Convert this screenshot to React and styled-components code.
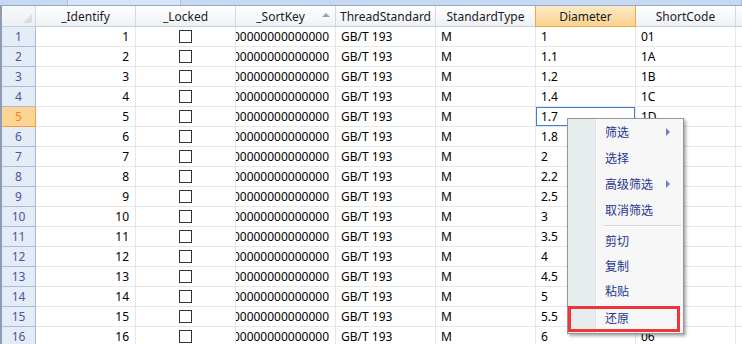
import React from 'react';
import styled, { createGlobalStyle } from 'styled-components';

const GlobalStyle = createGlobalStyle`
  html, body {
    margin: 0;
    padding: 0;
    background: #ffffff;
    overflow: hidden;
  }
  body {
    font-family: "Noto Sans", "Noto Sans CJK SC", sans-serif;
    font-size: 12px;
    color: #000000;
  }
`;

const Page = styled.div`
  position: relative;
  width: 742px;
  height: 344px;
  overflow: hidden;
`;

const TopStrip = styled.div`
  display: flex;
  height: 5px;
  border-bottom: 1px solid #8eaad0;
`;

const StripSeg = styled.div`
  width: ${(p) => p.$w}px;
  flex: ${(p) => (p.$grow ? 1 : 'none')};
  background: ${(p) => (p.$light ? '#d6e4f6' : '#c6d9f1')};
  border-right: 1px solid #a9bfdc;
`;

const Grid = styled.div`
  border-left: 2px solid #8d9db3;
  display: flex;
  flex-direction: column;
`;

const HeaderRow = styled.div`
  display: flex;
  height: 20px;
  border-bottom: 1px solid #c5cfdb;
  background: linear-gradient(#ffffff, #eef1f5);
`;

const Corner = styled.div`
  position: relative;
  flex: none;
  width: 33px;
  border-right: 1px solid #d3dae3;
  background: linear-gradient(#f7f8fa, #eceff3);

  &::after {
    content: '';
    position: absolute;
    right: 3px;
    bottom: 3px;
    border-left: 9px solid transparent;
    border-bottom: 9px solid #d9dde2;
  }
`;

const HeaderCell = styled.div`
  position: relative;
  flex: none;
  width: 99px;
  box-sizing: border-box;
  padding-right: ${(p) => (p.$sort ? '10px' : '0')};
  border-right: 1px solid ${(p) => (p.$active ? '#f3a648' : '#d3dae3')};
  border-left: ${(p) => (p.$active ? '1px solid #f3a648' : 'none')};
  margin-left: ${(p) => (p.$active ? '-1px' : '0')};
  ${(p) => (p.$active ? 'width: 101px;' : 'width: 100px;')}
  box-shadow: ${(p) => (p.$active ? '0 1px 0 #f3a648' : 'none')};
  background: ${(p) =>
    p.$active ? 'linear-gradient(#fde9c4, #f9d38f)' : 'transparent'};
  display: flex;
  align-items: center;
  justify-content: center;
  color: #1b1b1b;
  white-space: nowrap;
`;

const SortArrow = styled.span`
  position: absolute;
  right: 5px;
  top: 7px;
  width: 0;
  height: 0;
  border-left: 4px solid transparent;
  border-right: 4px solid transparent;
  border-bottom: 4px solid #98a3af;
`;

const Row = styled.div`
  display: flex;
  height: 19px;
  border-bottom: 1px solid #e6e6e6;
`;

const RowHead = styled.div`
  flex: none;
  width: 33px;
  margin-bottom: -1px;
  height: 19px;
  border-right: 1px solid ${(p) => (p.$active ? '#f0a048' : '#a7bcd6')};
  border-bottom: 1px solid ${(p) => (p.$active ? '#f0a048' : '#a7bcd6')};
  background: ${(p) => (p.$active ? '#fdd592' : '#e4ecf7')};
  color: ${(p) => (p.$active ? '#f2881e' : '#4a579d')};
  display: flex;
  align-items: center;
  justify-content: center;
`;

const Cell = styled.div`
  flex: none;
  box-sizing: border-box;
  width: 100px;
  padding: 0 ${(p) => (p.$align === 'right' ? '6px' : '0')} 0
    ${(p) => (p.$align === 'left' ? '5px' : '0')};
  border-right: 1px solid #e6e6e6;
  display: flex;
  align-items: center;
  justify-content: ${(p) =>
    p.$align === 'right' ? 'flex-end' : p.$align === 'center' ? 'center' : 'flex-start'};
  overflow: hidden;
  white-space: nowrap;
  box-shadow: ${(p) => (p.$selected ? 'inset 0 0 0 1px #3b7fd0' : 'none')};
`;

const Check = styled.span`
  width: 11px;
  height: 11px;
  border: 1px solid #333333;
  background: #ffffff;
`;

const Menu = styled.div`
  position: absolute;
  left: 567px;
  top: 118px;
  width: 115px;
  border: 1px solid #979797;
  background: linear-gradient(to right, #e7ecec 0, #e7ecec 27px, #dfe4e4 27px, #dfe4e4 28px, #ffffff 28px, #ffffff 29px, #f7f7f7 29px);
  box-shadow: 2px 2px 3px rgba(0, 0, 0, 0.35);
  padding-bottom: 2px;
`;

const MenuItem = styled.div`
  position: relative;
  height: ${(p) => p.$h || 26}px;
  margin-top: ${(p) => p.$mt || 0}px;
  display: flex;
  align-items: center;
  padding-left: 37px;
  color: #26358f;
  white-space: nowrap;
`;

const SubArrow = styled.span`
  position: absolute;
  left: 98px;
  top: 50%;
  margin-top: -4px;
  border-top: 4px solid transparent;
  border-bottom: 4px solid transparent;
  border-left: 4px solid #6d80cc;
`;

const Separator = styled.div`
  height: 5px;
  margin-left: 35px;
  margin-right: 2px;
  display: flex;
  flex-direction: column;
  justify-content: center;

  &::before {
    content: '';
    height: 1px;
    background: #d6d6d6;
  }
  &::after {
    content: '';
    height: 1px;
    background: #ffffff;
  }
`;

const Highlight = styled.div`
  position: absolute;
  left: 0;
  right: 3px;
  top: 1px;
  bottom: -1px;
  border: 3px solid #ee3539;
`;

const columns = [
  { title: '_Identify' },
  { title: '_Locked' },
  { title: '_SortKey', sort: true },
  { title: 'ThreadStandard' },
  { title: 'StandardType' },
  { title: 'Diameter', active: true },
  { title: 'ShortCode' },
  { title: '' },
];

const diameters = ['1', '1.1', '1.2', '1.4', '1.7', '1.8', '2', '2.2', '2.5', '3', '3.5', '4', '4.5', '5', '5.5', '6'];
const codes = ['01', '1A', '1B', '1C', '1D', '1E', '02', '2A', '2B', '03', '3A', '04', '4A', '05', '5A', '06'];

const rows = diameters.map((d, i) => ({
  id: i + 1,
  sortKey: '00000000000000000000',
  standard: 'GB/T 193',
  type: 'M',
  diameter: d,
  code: codes[i],
}));

const menuItems = [
  { label: '筛选', sub: true },
  { label: '选择' },
  { label: '高级筛选', sub: true },
  { label: '取消筛选' },
  { sep: true },
  { label: '剪切', h: 25 },
  { label: '复制', h: 25 },
  { label: '粘贴', h: 25 },
  { label: '还原', h: 26, mt: 2, mark: true },
];

const App = () => {
  return (
    <Page>
      <GlobalStyle />
      <TopStrip>
        <StripSeg $w={67} />
        <StripSeg $w={112} $light />
        <StripSeg $grow />
      </TopStrip>
      <Grid>
        <HeaderRow>
          <Corner />
          {columns.map((col, i) => (
            <HeaderCell key={i} $active={col.active} $sort={col.sort}>
              {col.title}
              {col.sort && <SortArrow />}
            </HeaderCell>
          ))}
        </HeaderRow>
        {rows.map((row) => (
          <Row key={row.id}>
            <RowHead $active={row.id === 5}>{row.id}</RowHead>
            <Cell $align="right">{row.id}</Cell>
            <Cell $align="center">
              <Check />
            </Cell>
            <Cell $align="right">{row.sortKey}</Cell>
            <Cell $align="left">{row.standard}</Cell>
            <Cell $align="left">{row.type}</Cell>
            <Cell $align="left" $selected={row.id === 5}>
              {row.diameter}
            </Cell>
            <Cell $align="left">{row.code}</Cell>
            <Cell $align="left" />
          </Row>
        ))}
      </Grid>
      <Menu>
        {menuItems.map((item, i) =>
          item.sep ? (
            <Separator key={i} />
          ) : (
            <MenuItem key={i} $h={item.h} $mt={item.mt}>
              {item.label}
              {item.sub && <SubArrow />}
              {item.mark && <Highlight />}
            </MenuItem>
          )
        )}
      </Menu>
    </Page>
  );
};

export default App;
